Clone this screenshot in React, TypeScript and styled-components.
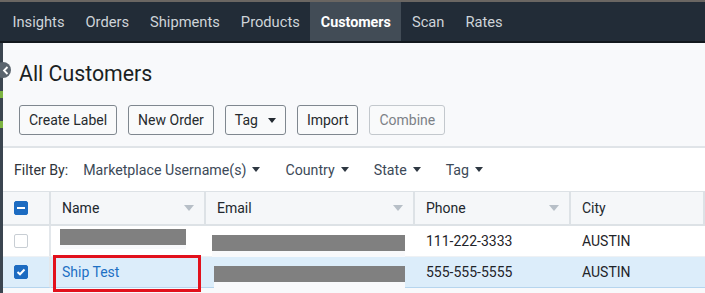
import React from 'react';
import styled, { createGlobalStyle, css } from 'styled-components';

const GlobalStyle = createGlobalStyle`
  html, body {
    margin: 0;
    padding: 0;
    background: #f8f9fb;
    font-family: Roboto, "Liberation Sans", Arial, sans-serif;
    overflow: hidden;
  }
  * { box-sizing: border-box; }
`;

const Page = styled.div`
  width: 705px;
  height: 293px;
  display: flex;
  flex-direction: column;
  border-top: 2px solid #6a6662;
  overflow: hidden;
`;

const NavBar = styled.nav`
  height: 41px;
  display: flex;
  align-items: stretch;
  background: #222c37;
  border-bottom: 2px solid #12181e;
  padding-left: 2px;
`;

const NavItem = styled.a<{ active?: boolean }>`
  display: flex;
  align-items: center;
  padding: 0 10.5px;
  font-size: 14.7px;
  color: #cfd4d9;
  text-decoration: none;
  ${({ active }) =>
    active &&
    css`
      background: #424c56;
      color: #ffffff;
      font-weight: 700;
      font-size: 14.3px;
    `}
`;

const Body = styled.div`
  flex: 1;
  display: flex;
  position: relative;
  min-height: 0;
`;

const Rail = styled.div`
  width: 3px;
  background: #3b4550;
  display: flex;
  flex-direction: column;
`;

const RailMark = styled.span<{ top: number }>`
  display: block;
  margin-top: ${({ top }) => top}px;
  height: 7px;
  background: #7cb342;
`;

const CollapseKnob = styled.span`
  position: absolute;
  left: -5px;
  top: 19px;
  width: 16px;
  height: 16px;
  border-radius: 50%;
  background: #5a646e;
  display: flex;
  align-items: center;
  justify-content: center;
  padding-left: 5px;
`;

const Content = styled.main`
  flex: 1;
  display: flex;
  flex-direction: column;
  min-width: 0;
`;

const Title = styled.h1`
  margin: 0;
  padding: 19px 16px 0;
  font-size: 21.3px;
  line-height: 24px;
  font-weight: 400;
  color: #1b1f23;
`;

const Toolbar = styled.div`
  display: flex;
  gap: 11px;
  padding: 19px 16px 11px;
  border-bottom: 2px solid #e0e4e8;
`;

const Button = styled.button<{ disabled?: boolean }>`
  height: 30px;
  padding: 0 9px;
  display: flex;
  align-items: center;
  gap: 10px;
  font-family: inherit;
  font-size: 14px;
  color: #262a2e;
  background: #f9fafb;
  border: 1px solid #7f878f;
  border-radius: 3px;
  ${({ disabled }) =>
    disabled &&
    css`
      color: #7c8187;
      border-color: #c3c8cd;
    `}
`;

const Caret = styled.span<{ size?: number; color?: string }>`
  display: inline-block;
  width: 0;
  height: 0;
  border-left: ${({ size = 4 }) => size}px solid transparent;
  border-right: ${({ size = 4 }) => size}px solid transparent;
  border-top: ${({ size = 4 }) => size + 1}px solid ${({ color = '#232a31' }) => color};
`;

const FilterBar = styled.div`
  height: 43px;
  background: #ffffff;
  display: flex;
  align-items: center;
  gap: 15px;
  padding-left: 11px;
  font-size: 14.2px;
`;

const FilterLabel = styled.span`
  color: #2f353b;
`;

const FilterItem = styled.span`
  display: flex;
  align-items: center;
  gap: 6px;
  color: #3c4957;
  margin-right: 10px;
`;

const Grid = styled.div`
  display: grid;
  grid-template-columns: 48px 155px 209px 156px 1fr;
  font-size: 14px;
`;

const HeadCell = styled.div`
  height: 35px;
  background: #f5f7f9;
  border-top: 1px solid #dde2e6;
  border-bottom: 2px solid #dde2e6;
  border-right: 2px solid #dde2e6;
  display: flex;
  align-items: center;
  justify-content: space-between;
  padding: 0 10px 0 11px;
  color: #22282e;
  &:last-child {
    border-right: none;
  }
`;

const Cell = styled.div<{ selected?: boolean; divider?: boolean }>`
  position: relative;
  height: 31px;
  display: flex;
  align-items: center;
  padding-left: 11px;
  color: #1f2429;
  background: ${({ selected }) => (selected ? '#dcedfa' : '#ffffff')};
  border-bottom: 1px solid ${({ selected }) => (selected ? '#b6d5ee' : '#eef1f4')};
  ${({ divider }) =>
    divider &&
    css`
      border-right: 2px solid #e3e7eb;
    `}
`;

const Checkbox = styled.span<{ state: 'off' | 'on' | 'mixed' }>`
  width: 14px;
  height: 14px;
  border-radius: 2px;
  display: flex;
  align-items: center;
  justify-content: center;
  background: ${({ state }) => (state === 'off' ? '#ffffff' : '#1c6bc1')};
  border: 1px solid ${({ state }) => (state === 'off' ? '#c8ced4' : '#1c6bc1')};
`;

const Dash = styled.span`
  width: 8px;
  height: 2px;
  background: #ffffff;
`;

const Redaction = styled.span<{ w: number; shift: number; below: number }>`
  display: block;
  width: ${({ w }) => w}px;
  height: 16px;
  margin-left: ${({ shift }) => shift}px;
  margin-top: ${({ below }) => (below > 10 ? 4 : -9)}px;
  background: #808080;
  box-shadow: 0 ${({ below }) => below}px 0 0 #f8f9fb;
`;

const LinkText = styled.a`
  color: #1d70c4;
  text-decoration: none;
`;

const Highlight = styled.span`
  position: absolute;
  left: 2px;
  top: -2px;
  width: 148px;
  height: 37px;
  border: 3px solid #e2111c;
  pointer-events: none;
`;

const navItems = ['Insights', 'Orders', 'Shipments', 'Products', 'Customers', 'Scan', 'Rates'];
const filters = ['Marketplace Username(s)', 'Country', 'State', 'Tag'];
const columns = ['Name', 'Email', 'Phone', 'City'];

export default function App() {
  return (
    <>
      <GlobalStyle />
      <Page>
        <NavBar>
          {navItems.map((n) => (
            <NavItem key={n} active={n === 'Customers'}>
              {n}
            </NavItem>
          ))}
        </NavBar>
        <Body>
          <Rail>
            <RailMark top={48} />
            <RailMark top={23} />
          </Rail>
          <CollapseKnob>
            <svg width="7" height="9" viewBox="0 0 7 9">
              <path d="M5.5 1 L2 4.5 L5.5 8" stroke="#fff" strokeWidth="1.8" fill="none" />
            </svg>
          </CollapseKnob>
          <Content>
            <Title>All Customers</Title>
            <Toolbar>
              <Button>Create Label</Button>
              <Button>New Order</Button>
              <Button>
                Tag <Caret />
              </Button>
              <Button>Import</Button>
              <Button disabled>Combine</Button>
            </Toolbar>
            <FilterBar>
              <FilterLabel>Filter By:</FilterLabel>
              {filters.map((f) => (
                <FilterItem key={f}>
                  {f}
                  <Caret size={4} color="#2e3842" />
                </FilterItem>
              ))}
            </FilterBar>
            <Grid>
              <HeadCell>
                <Checkbox state="mixed">
                  <Dash />
                </Checkbox>
              </HeadCell>
              {columns.map((c) => (
                <HeadCell key={c}>
                  {c}
                  {c !== 'City' && <Caret size={5} color="#b7bfc7" />}
                </HeadCell>
              ))}

              <Cell divider>
                <Checkbox state="off" />
              </Cell>
              <Cell style={{ paddingLeft: 0 }}>
                <Redaction w={126} shift={9} below={4} />
              </Cell>
              <Cell style={{ paddingLeft: 0 }}>
                <Redaction w={193} shift={6} below={11} />
              </Cell>
              <Cell>111-222-3333</Cell>
              <Cell>AUSTIN</Cell>

              <Cell selected divider>
                <Checkbox state="on">
                  <svg width="10" height="8" viewBox="0 0 10 8">
                    <path d="M1.5 4 L4 6.3 L8.5 1.5" stroke="#fff" strokeWidth="2" fill="none" />
                  </svg>
                </Checkbox>
              </Cell>
              <Cell selected>
                <Highlight />
                <LinkText href="#">Ship Test</LinkText>
              </Cell>
              <Cell selected style={{ paddingLeft: 0 }}>
                <Redaction w={191} shift={8} below={13} />
              </Cell>
              <Cell selected>555-555-5555</Cell>
              <Cell selected>AUSTIN</Cell>
            </Grid>
          </Content>
        </Body>
      </Page>
    </>
  );
}
